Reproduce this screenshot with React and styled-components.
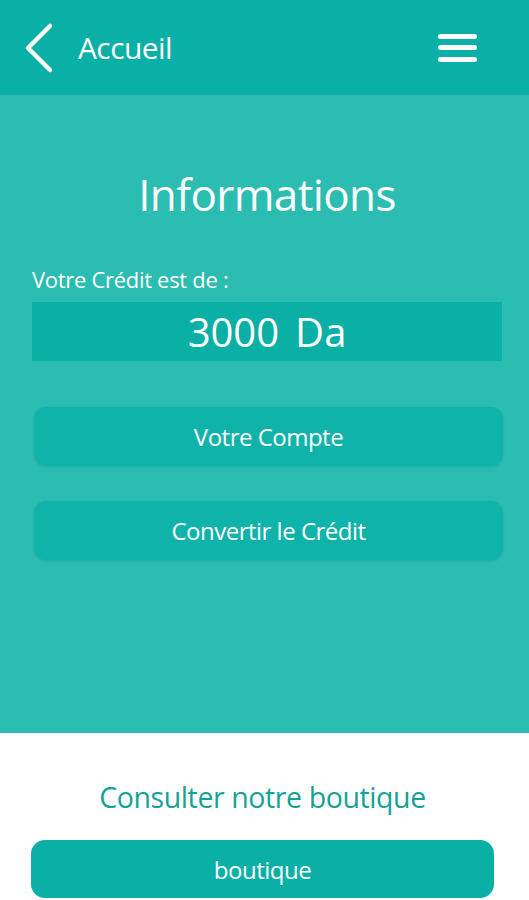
import React from "react";
import styled, { createGlobalStyle } from "styled-components";

const GlobalStyle = createGlobalStyle`
  html, body {
    margin: 0;
    padding: 0;
    background: #ffffff;
    font-family: "Open Sans", "Liberation Sans", sans-serif;
  }
`;

const Screen = styled.div`
  width: 529px;
  height: 900px;
  display: flex;
  flex-direction: column;
  overflow: hidden;
`;

const Header = styled.header`
  height: 95px;
  flex-shrink: 0;
  background: #0aafa6;
  display: flex;
  align-items: center;
  padding: 0 52px 0 22px;
  box-sizing: border-box;
`;

const BackButton = styled.button`
  background: none;
  border: none;
  padding: 0;
  display: flex;
  align-items: center;
  cursor: pointer;
`;

const HeaderTitle = styled.h1`
  margin: 0 0 0 24px;
  flex: 1;
  font-size: 30px;
  line-height: 36px;
  font-weight: 400;
  color: #ffffff;
  letter-spacing: -0.6px;
`;

const Menu = styled.button`
  background: none;
  border: none;
  padding: 0;
  width: 39px;
  display: flex;
  flex-direction: column;
  gap: 6.5px;
  cursor: pointer;
`;

const MenuLine = styled.span`
  display: block;
  height: 5px;
  border-radius: 3px;
  background: #ffffff;
`;

const Main = styled.main`
  flex: 1;
  background: #2bbcb2;
  display: flex;
  flex-direction: column;
  padding: 73px 27px 0 32px;
`;

const Title = styled.h2`
  margin: 0;
  text-align: center;
  font-size: 44px;
  line-height: 53px;
  font-weight: 400;
  color: #ffffff;
  letter-spacing: -0.6px;
`;

const Label = styled.p`
  margin: 45px 0 10px;
  font-size: 22px;
  line-height: 26px;
  color: #ffffff;
  letter-spacing: -0.3px;
`;

const CreditBox = styled.div`
  height: 59px;
  background: #0aafa6;
  display: flex;
  align-items: center;
  justify-content: center;
  gap: 16px;
  font-size: 40px;
  color: #ffffff;
`;

const Actions = styled.div`
  display: flex;
  flex-direction: column;
  gap: 35px;
  margin: 46px -1px 0 2px;
`;

const ActionButton = styled.button`
  height: 59px;
  border: none;
  border-radius: 12px;
  background: #10b3a9;
  color: #ffffff;
  font-family: inherit;
  font-size: 24px;
  letter-spacing: -0.5px;
  box-shadow: 0 1px 3px rgba(0, 90, 85, 0.15);
  cursor: pointer;
`;

const Footer = styled.footer`
  height: 167px;
  flex-shrink: 0;
  background: #ffffff;
  display: flex;
  flex-direction: column;
  align-items: center;
  padding: 0 35px 0 31px;
  box-sizing: border-box;
`;

const ShopTitle = styled.h3`
  margin: 47px 0 26px;
  font-size: 28.5px;
  line-height: 34px;
  font-weight: 400;
  color: #14a298;
  letter-spacing: -0.4px;
`;

const ShopButton = styled(ActionButton)`
  width: 100%;
  height: 58px;
  flex-shrink: 0;
  border-radius: 14px;
  background: #0aafa6;
  box-shadow: none;
`;

export default function App() {
  return (
    <Screen>
      <GlobalStyle />
      <Header>
        <BackButton aria-label="Retour">
          <svg width="32" height="52" viewBox="0 0 32 52">
            <path
              d="M28 4 L6 26 L28 48"
              fill="none"
              stroke="#ffffff"
              strokeWidth="4.5"
              strokeLinecap="round"
              strokeLinejoin="round"
            />
          </svg>
        </BackButton>
        <HeaderTitle>Accueil</HeaderTitle>
        <Menu aria-label="Menu">
          <MenuLine />
          <MenuLine />
          <MenuLine />
        </Menu>
      </Header>
      <Main>
        <Title>Informations</Title>
        <Label>Votre Crédit est de :</Label>
        <CreditBox>
          <span>3000</span>
          <span>Da</span>
        </CreditBox>
        <Actions>
          <ActionButton>Votre Compte</ActionButton>
          <ActionButton>Convertir le Crédit</ActionButton>
        </Actions>
      </Main>
      <Footer>
        <ShopTitle>Consulter notre boutique</ShopTitle>
        <ShopButton>boutique</ShopButton>
      </Footer>
    </Screen>
  );
}
